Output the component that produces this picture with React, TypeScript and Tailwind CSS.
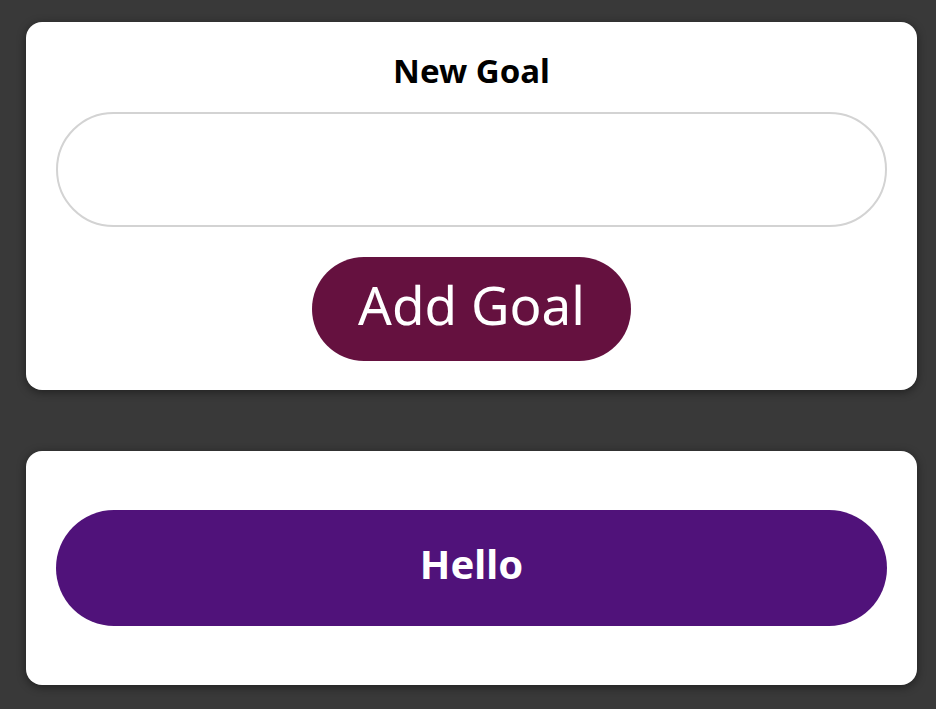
import React, { useState } from "react";

export default function App() {
  const [goal, setGoal] = useState("");

  return (
    <div
      className="min-h-screen w-full bg-[#393939] pt-[22px] pl-[26px]"
      style={{ fontFamily: '"Noto Sans", "Open Sans", sans-serif' }}
    >
      <div className="flex w-[891px] flex-col gap-[61px]">
        {/* input card */}
        <div className="flex flex-col items-center rounded-2xl bg-white px-[30px] pt-[27px] pb-[29px] shadow-[0_2px_10px_rgba(0,0,0,0.45)]">
          <h2 className="mb-[19px] h-[44px] text-[33px] leading-[44px] font-bold text-black">New Goal</h2>
          <input
            className="h-[115px] w-full rounded-full border-2 border-[#d3d3d3] px-8 text-[32px] outline-none"
            value={goal}
            onChange={(e) => setGoal(e.target.value)}
          />
          <button className="mt-[30px] flex h-[104px] w-[319px] items-center justify-center rounded-full bg-[#65113f] pb-[10px] text-[53px] leading-none text-white">
            Add Goal
          </button>
        </div>

        {/* list card */}
        <div className="flex flex-col rounded-2xl bg-white px-[30px] py-[59px] shadow-[0_2px_10px_rgba(0,0,0,0.45)]">
          <div className="flex h-[116px] w-full items-center justify-center rounded-full bg-[#50127a] pb-[8px] text-[40px] font-bold text-white">
            Hello
          </div>
        </div>
      </div>
    </div>
  );
}
